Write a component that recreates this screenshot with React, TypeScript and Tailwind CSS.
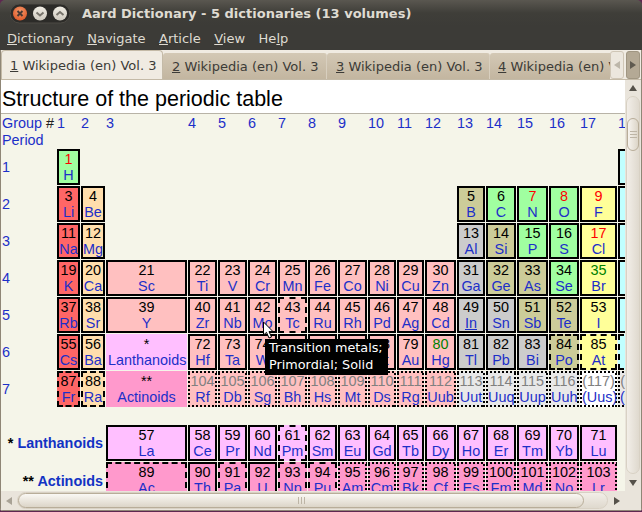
import React from "react";

const BG: Record<string, string> = {
  alk: "bg-[#ff6666]",
  ear: "bg-[#ffdead]",
  tr: "bg-[#ffc0c0]",
  la: "bg-[#ffbfff]",
  ac: "bg-[#ff99cc]",
  me: "bg-[#cccc99]",
  po: "bg-[#cccccc]",
  no: "bg-[#a0ffa0]",
  ha: "bg-[#ffff99]",
  ne: "bg-[#c0ffff]",
  un: "bg-[#e8e8e8]",
  wh: "bg-white",
};
const BORDER: Record<string, string> = {
  s: "border-2 border-solid border-black",
  d: "border-2 border-dashed border-black",
  o: "border-2 border-solid border-transparent bg-no-repeat [background-origin:border-box] [background-image:repeating-linear-gradient(90deg,#000_0_2px,transparent_2px_4px),repeating-linear-gradient(90deg,#000_0_2px,transparent_2px_4px),repeating-linear-gradient(0deg,#000_0_2px,transparent_2px_4px),repeating-linear-gradient(0deg,#000_0_2px,transparent_2px_4px)] [background-size:100%_2px,100%_2px,2px_100%,2px_100%] [background-position:left_top,left_bottom,left_top,right_top]",
  n: "border-2 border-solid border-transparent",
};
const NUM: Record<string, string> = {
  k: "text-black",
  r: "text-[#ff0000]",
  g: "text-[#008000]",
  y: "text-[#808080]",
};

type C = { n?: string; s?: string; bg?: string; b?: string; c?: string; span?: number; u?: boolean };
const e = (n: string, s: string, bg: string, b = "s", c = "k", u = false): C => ({ n, s, bg, b, c, u });
const gap = (span: number): C => ({ span });

const rows: { label: string; cells: C[] }[] = [
  { label: "1", cells: [e("1", "H", "no", "s", "r"), gap(16), e("2", "He", "ne", "s", "r")] },
  {
    label: "2",
    cells: [
      e("3", "Li", "alk"), e("4", "Be", "ear"), gap(10),
      e("5", "B", "me"), e("6", "C", "no"), e("7", "N", "no", "s", "r"), e("8", "O", "no", "s", "r"),
      e("9", "F", "ha", "s", "r"), e("10", "Ne", "ne", "s", "r"),
    ],
  },
  {
    label: "3",
    cells: [
      e("11", "Na", "alk"), e("12", "Mg", "ear"), gap(10),
      e("13", "Al", "po"), e("14", "Si", "me"), e("15", "P", "no"), e("16", "S", "no"),
      e("17", "Cl", "ha", "s", "r"), e("18", "Ar", "ne", "s", "r"),
    ],
  },
  {
    label: "4",
    cells: [
      e("19", "K", "alk"), e("20", "Ca", "ear"), e("21", "Sc", "tr"), e("22", "Ti", "tr"), e("23", "V", "tr"),
      e("24", "Cr", "tr"), e("25", "Mn", "tr"), e("26", "Fe", "tr"), e("27", "Co", "tr"), e("28", "Ni", "tr"),
      e("29", "Cu", "tr"), e("30", "Zn", "tr"), e("31", "Ga", "po"), e("32", "Ge", "me"), e("33", "As", "me"),
      e("34", "Se", "no"), e("35", "Br", "ha", "s", "g"), e("36", "Kr", "ne", "s", "r"),
    ],
  },
  {
    label: "5",
    cells: [
      e("37", "Rb", "alk"), e("38", "Sr", "ear"), e("39", "Y", "tr"), e("40", "Zr", "tr"), e("41", "Nb", "tr"),
      e("42", "Mo", "tr"), e("43", "Tc", "tr", "d"), e("44", "Ru", "tr"), e("45", "Rh", "tr"), e("46", "Pd", "tr"),
      e("47", "Ag", "tr"), e("48", "Cd", "tr"), e("49", "In", "po", "s", "k", true), e("50", "Sn", "po"), e("51", "Sb", "me"),
      e("52", "Te", "me"), e("53", "I", "ha"), e("54", "Xe", "ne", "s", "r"),
    ],
  },
  {
    label: "6",
    cells: [
      e("55", "Cs", "alk"), e("56", "Ba", "ear"), e("*", "Lanthanoids", "la", "n"), e("72", "Hf", "tr"), e("73", "Ta", "tr"),
      e("74", "W", "tr"), e("75", "Re", "tr"), e("76", "Os", "tr"), e("77", "Ir", "tr"), e("78", "Pt", "tr"),
      e("79", "Au", "tr"), e("80", "Hg", "tr", "s", "g"), e("81", "Tl", "po"), e("82", "Pb", "po"), e("83", "Bi", "po"),
      e("84", "Po", "me", "d"), e("85", "At", "ha", "d"), e("86", "Rn", "ne", "d", "r"),
    ],
  },
  {
    label: "7",
    cells: [
      e("87", "Fr", "alk", "d"), e("88", "Ra", "ear", "d"), e("**", "Actinoids", "ac", "n"),
      e("104", "Rf", "tr", "o", "y"), e("105", "Db", "tr", "o", "y"), e("106", "Sg", "tr", "o", "y"),
      e("107", "Bh", "tr", "o", "y"), e("108", "Hs", "tr", "o", "y"), e("109", "Mt", "tr", "o", "y"),
      e("110", "Ds", "tr", "o", "y"), e("111", "Rg", "tr", "o", "y"), e("112", "Uub", "tr", "o", "y"),
      e("113", "Uut", "un", "o", "y"), e("114", "Uuq", "un", "o", "y"), e("115", "Uup", "un", "o", "y"),
      e("116", "Uuh", "un", "o", "y"), e("(117)", "(Uus)", "wh", "o", "y"), e("(118)", "(Uuo)", "un", "o", "y"),
    ],
  },
];

const lanth = ["57 La", "58 Ce", "59 Pr", "60 Nd", "61 Pm", "62 Sm", "63 Eu", "64 Gd", "65 Tb", "66 Dy", "67 Ho", "68 Er", "69 Tm", "70 Yb", "71 Lu"];
const actin = ["89 Ac", "90 Th", "91 Pa", "92 U", "93 Np", "94 Pu", "95 Am", "96 Cm", "97 Bk", "98 Cf", "99 Es", "100 Fm", "101 Md", "102 No", "103 Lr"];
const actBorder = (i: number) => (i === 0 || i === 2 || i === 4 || i === 5 ? "d" : i === 1 || i === 3 ? "s" : "o");

const widths = [54, 23, 24, 81, 29, 29, 29, 29, 29, 29, 28, 27, 31, 28, 30, 31, 30, 37, 37];
const groups = Array.from({ length: 18 }, (_, i) => String(i + 1));

function Cell({ c }: { c: C }) {
  if (c.span) return <td colSpan={c.span} />;
  return (
    <td className={`p-0 h-[36px] text-center align-top whitespace-nowrap leading-[16px] ${BG[c.bg!]} ${BORDER[c.b!]}`}>
      <div className={NUM[c.c!]}>{c.n}</div>
      <div className={`text-[#1c2fc8] ${c.u ? "underline" : ""}`}>{c.s}</div>
    </td>
  );
}

function WindowButtons() {
  return (
    <svg width="60" height="20" viewBox="0 0 60 20" className="ml-[10px]">
      <defs>
        <radialGradient id="red" cx="50%" cy="35%" r="65%">
          <stop offset="0%" stopColor="#f59a6c" />
          <stop offset="100%" stopColor="#df5a2a" />
        </radialGradient>
        <linearGradient id="gr" x1="0" y1="0" x2="0" y2="1">
          <stop offset="0%" stopColor="#f0ece4" />
          <stop offset="100%" stopColor="#cfcabf" />
        </linearGradient>
      </defs>
      <rect x="0" y="0" width="60" height="19" rx="9.5" fill="#2c2b28" stroke="#4d4b45" />
      <circle cx="10" cy="9.5" r="7" fill="url(#red)" />
      <path d="M7.5 7l5 5M12.5 7l-5 5" stroke="#4a3a34" strokeWidth="2" />
      <circle cx="30" cy="9.5" r="7" fill="url(#gr)" />
      <path d="M26.5 8.5l3.5 3 3.5-3" stroke="#77736b" strokeWidth="2" fill="none" />
      <circle cx="50" cy="9.5" r="7" fill="url(#gr)" />
      <path d="M46.5 11l3.5-3 3.5 3" stroke="#77736b" strokeWidth="2" fill="none" />
    </svg>
  );
}

const Tri = ({ d, color, size = 10 }: { d: string; color: string; size?: number }) => (
  <svg width={size} height={size} viewBox="0 0 10 10">
    <path d={d} fill={color} />
  </svg>
);
const LEFT = "M2 5l6-4v8z";
const RIGHT = "M8 5L2 1v8z";
const UP = "M5 2l4 6H1z";
const DOWN = "M5 8L1 2h8z";

function Grip({ vertical }: { vertical?: boolean }) {
  return vertical ? (
    <div className="flex flex-col gap-[2px] w-[7px]">
      <div className="h-px bg-[#bdb5a6]" />
      <div className="h-px bg-[#bdb5a6]" />
      <div className="h-px bg-[#bdb5a6]" />
    </div>
  ) : (
    <div className="flex gap-[2px] h-[7px]">
      <div className="w-px bg-[#bdb5a6]" />
      <div className="w-px bg-[#bdb5a6]" />
      <div className="w-px bg-[#bdb5a6]" />
    </div>
  );
}

function Tab({ n, active, cls }: { n: number; active?: boolean; cls?: string }) {
  return active ? (
    <div className="shrink-0 w-[162px] h-[30px] pl-[8px] flex items-center bg-[#f0ebe2] border border-b-0 border-[#c4baa7] rounded-t-[4px] text-[#3c3b37] whitespace-nowrap">
      <span className="underline">{n}</span>&nbsp;Wikipedia (en) Vol. 3
    </div>
  ) : (
    <div className={`shrink-0 h-[27px] mt-[3px] flex items-center bg-linear-to-b from-[#d3c8b5] to-[#c2b59f] border-r border-[#d8cfbf] rounded-t-[3px] text-[#3c3b37] whitespace-nowrap ${cls}`}>
      <span className="underline">{n}</span>&nbsp;Wikipedia (en) Vol. 3
    </div>
  );
}

export default function App() {
  const dej = "font-['DejaVu_Sans',sans-serif]";
  return (
    <div className="relative w-[642px] h-[512px] overflow-hidden bg-[#5e2750]">
      <div className={`w-[642px] h-[511px] flex flex-col rounded-t-[5px] rounded-b-[3px] overflow-hidden ${dej} text-[13px]`}>
        {/* Title bar */}
        <div className="h-[26px] shrink-0 flex items-center bg-linear-to-b from-[#5a5750] via-[#3f3e39] to-[#3c3b37] pt-[2px]">
          <WindowButtons />
          <div className="ml-[12px] font-bold text-[#dfdbd2] whitespace-nowrap">
            Aard Dictionary - 5 dictionaries (13 volumes)
          </div>
        </div>
        {/* Menu bar */}
        <div className="h-[24px] shrink-0 flex items-center bg-[#3c3b37] text-[#dfdbd2] pl-[7px] gap-[13.5px] pt-[1px]">
          <span><span className="underline">D</span>ictionary</span>
          <span><span className="underline">N</span>avigate</span>
          <span><span className="underline">A</span>rticle</span>
          <span><span className="underline">V</span>iew</span>
          <span>He<span className="underline">l</span>p</span>
        </div>
        {/* Window body */}
        <div className="flex-1 min-h-0 flex flex-col border-x border-b border-[#8f8676] bg-[#e9e4db]">
          {/* Tabs */}
          <div className="h-[30px] shrink-0 flex bg-[#f0ebe2] border-b border-[#c4baa7]">
            <div className="flex-1 min-w-0 flex overflow-hidden">
              <Tab n={1} active />
              <Tab n={2} cls="w-[164px] pl-[9px]" />
              <Tab n={3} cls="w-[163px] pl-[9px]" />
              <Tab n={4} cls="w-[163px] pl-[8px]" />
            </div>
            <div className="shrink-0 flex items-start gap-[2px] pt-[1px] pr-px">
              <div className="w-[14px] h-[28px] flex items-center justify-center bg-[#ece7de] border border-[#cfc6b6] rounded-[3px]">
                <Tri d={LEFT} color="#bdb7aa" />
              </div>
              <div className="w-[14px] h-[28px] flex items-center justify-center bg-[#b4a995] border border-[#a09682] rounded-[3px]">
                <Tri d={RIGHT} color="#5f5a50" />
              </div>
            </div>
          </div>
          {/* Content + vertical scrollbar */}
          <div className="flex-1 min-h-0 flex">
            <div className="flex-1 min-w-0 flex flex-col">
              <div className="h-[34px] shrink-0 bg-white border-b border-[#b8b3a7] pl-px font-['Liberation_Sans',sans-serif] text-[21.5px] leading-[38px] text-black whitespace-nowrap">
                Structure of the periodic table
              </div>
              <div className="flex-1 min-h-0 overflow-hidden bg-[#f5f5e9] font-['Liberation_Sans',sans-serif] text-[14.4px]">
                <table className="table-fixed border-separate border-spacing-px w-[655px]">
                  <colgroup>
                    {widths.map((w, i) => (
                      <col key={i} style={{ width: w }} />
                    ))}
                  </colgroup>
                  <tbody>
                    <tr className="h-[16px] text-[#1c2fc8] leading-[16px]">
                      <td className="p-0 whitespace-nowrap">
                        Group <span className="text-[#222]">#</span>
                      </td>
                      {groups.map((g) => (
                        <td key={g} className="p-0">{g}</td>
                      ))}
                    </tr>
                    <tr className="h-[16px] text-[#1c2fc8] leading-[16px]">
                      <td className="p-0">Period</td>
                      <td colSpan={18} />
                    </tr>
                    {rows.map((r) => (
                      <tr key={r.label}>
                        <td className="p-0 pt-[2px] text-[#1c2fc8]">{r.label}</td>
                        {r.cells.map((c, i) => (
                          <Cell key={i} c={c} />
                        ))}
                      </tr>
                    ))}
                    <tr className="h-[16px]">
                      <td colSpan={19} />
                    </tr>
                    <tr>
                      <td colSpan={3} className="p-0 pt-[2px] text-right font-bold whitespace-nowrap pr-[2px]">
                        <span>* </span>
                        <span className="text-[#1233c4]">Lanthanoids</span>
                      </td>
                      {lanth.map((t, i) => {
                        const [n, s] = t.split(" ");
                        return <Cell key={t} c={e(n, s, "la", i === 4 ? "d" : "s")} />;
                      })}
                      <td />
                    </tr>
                    <tr>
                      <td colSpan={3} className="p-0 pt-[3px] text-right font-bold whitespace-nowrap pr-[2px]">
                        <span>** </span>
                        <span className="text-[#1233c4]">Actinoids</span>
                      </td>
                      {actin.map((t, i) => {
                        const [n, s] = t.split(" ");
                        return <Cell key={t} c={e(n, s, "ac", actBorder(i))} />;
                      })}
                      <td />
                    </tr>
                  </tbody>
                </table>
              </div>
            </div>
            {/* Vertical scrollbar */}
            <div className="w-[16px] shrink-0 flex flex-col bg-[#e9e4db]">
              <div className="h-[16px] shrink-0 flex items-center justify-center">
                <Tri d={UP} color="#55514a" />
              </div>
              <div className="flex-1 min-h-0 mx-px pt-[21px] rounded-full bg-linear-to-r from-[#f2eee8] to-[#dfd9ce] border border-[#d8d1c4]">
                <div className="h-[33px] flex items-center justify-center rounded-full bg-linear-to-r from-[#f7f4ef] to-[#dcd5c8] border border-[#b8ad99]">
                  <Grip vertical />
                </div>
              </div>
              <div className="h-[17px] shrink-0 flex items-center justify-center">
                <Tri d={DOWN} color="#55514a" />
              </div>
            </div>
          </div>
          {/* Horizontal scrollbar */}
          <div className="h-[19px] shrink-0 flex items-center bg-[#e9e4db]">
            <div className="w-[16px] shrink-0 flex justify-center">
              <Tri d={LEFT} color="#a8a296" />
            </div>
            <div className="w-[591px] h-[17px] shrink-0 flex rounded-full bg-linear-to-b from-[#f2eee8] to-[#dfd9ce] border border-[#d8d1c4]">
              <div className="w-[566px] flex items-center justify-center rounded-full bg-linear-to-b from-[#faf8f4] to-[#dcd5c8] border border-[#b8ad99]">
                <Grip />
              </div>
            </div>
            <div className="w-[17px] shrink-0 flex justify-center">
              <Tri d={RIGHT} color="#55514a" />
            </div>
          </div>
        </div>
      </div>
      {/* Tooltip */}
      <div className={`absolute left-[265px] top-[339px] w-[123px] h-[36px] bg-black text-white pl-[4px] text-[12.8px] leading-[17px] whitespace-nowrap ${dej}`}>
        Transition metals;
        <br />
        Primordial; Solid
      </div>
      {/* Mouse pointer */}
      <svg className="absolute left-[262px] top-[321px]" width="16" height="20" viewBox="0 0 16 20">
        <path d="M1.5 1v13l3-2.6 2.5 5.6 2.5-1-2.5-5.4h4z" fill="#fff" stroke="#000" strokeWidth="1" />
      </svg>
    </div>
  );
}
